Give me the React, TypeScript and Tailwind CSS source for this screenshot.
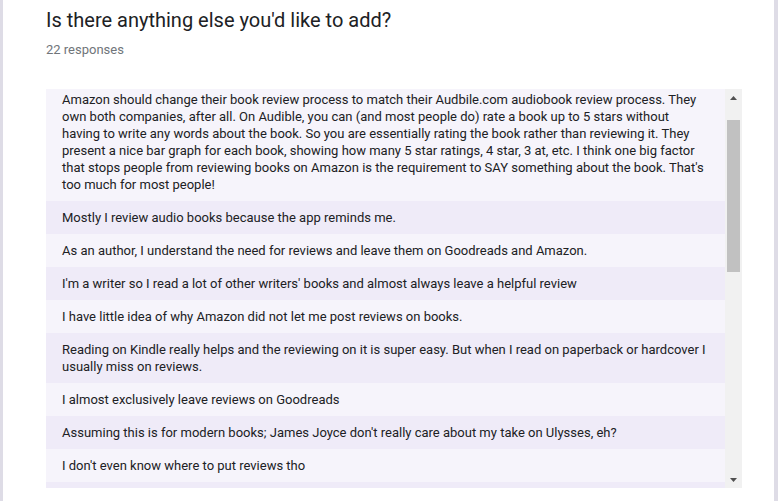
import React from "react";

const responses: string[] = [
  "Amazon should change their book review process to match their Audbile.com audiobook review process. They own both companies, after all. On Audible, you can (and most people do) rate a book up to 5 stars without having to write any words about the book. So you are essentially rating the book rather than reviewing it. They present a nice bar graph for each book, showing how many 5 star ratings, 4 star, 3 at, etc. I think one big factor that stops people from reviewing books on Amazon is the requirement to SAY something about the book. That's too much for most people!",
  "Mostly I review audio books because the app reminds me.",
  "As an author, I understand the need for reviews and leave them on Goodreads and Amazon.",
  "I'm a writer so I read a lot of other writers' books and almost always leave a helpful review",
  "I have little idea of why Amazon did not let me post reviews on books.",
  "Reading on Kindle really helps and the reviewing on it is super easy. But when I read on paperback or hardcover I usually miss on reviews.",
  "I almost exclusively leave reviews on Goodreads",
  "Assuming this is for modern books; James Joyce don't really care about my take on Ulysses, eh?",
  "I don't even know where to put reviews tho",
];

function Arrow({ up }: { up: boolean }) {
  return (
    <svg width="7" height="4" viewBox="0 0 7 4" className="block">
      {up ? (
        <polygon points="3.5,0 7,4 0,4" fill="#505050" />
      ) : (
        <polygon points="0,0 7,0 3.5,4" fill="#505050" />
      )}
    </svg>
  );
}

export default function App() {
  return (
    <div
      className="w-[778px] h-[501px] bg-white flex overflow-hidden"
      style={{ fontFamily: "Roboto, 'Noto Sans', Arial, sans-serif" }}
    >
      <div className="flex-1 flex flex-col border-l-[3px] border-r-[4px] border-[#dedce6] pl-[43px] pr-[32px] pt-[8px]">
        <h1 className="text-[20px] leading-[24px] text-[#202124] font-normal">
          Is there anything else you'd like to add?
        </h1>
        <div className="mt-[10px] text-[13px] leading-[16px] text-[#70757a]">
          22 responses
        </div>

        <div className="mt-[31px] h-[399px] flex">
          <div className="flex-1 overflow-hidden">
            <div className="-mt-[6px]">
              {responses.map((r, i) => (
                <div
                  key={i}
                  className={
                    (i % 2 === 0 ? "bg-[#f6f4fb]" : "bg-[#efebf8]") +
                    " px-[16px] py-[8px] text-[13px] leading-[17px] text-[#202124]"
                  }
                >
                  {r}
                </div>
              ))}
              {/* next row, scrolled below the fold */}
              <div className="bg-[#efebf8] h-[33px]" />
            </div>
          </div>

          <div className="w-[17px] bg-[#f1f1f1] flex flex-col">
            <div className="h-[17px] flex items-center justify-center">
              <Arrow up />
            </div>
            <div className="flex-1 px-[2px]">
              <div className="mt-[14px] h-[152px] bg-[#c1c1c1]" />
            </div>
            <div className="h-[17px] flex items-center justify-center">
              <Arrow up={false} />
            </div>
          </div>
        </div>
      </div>
    </div>
  );
}
